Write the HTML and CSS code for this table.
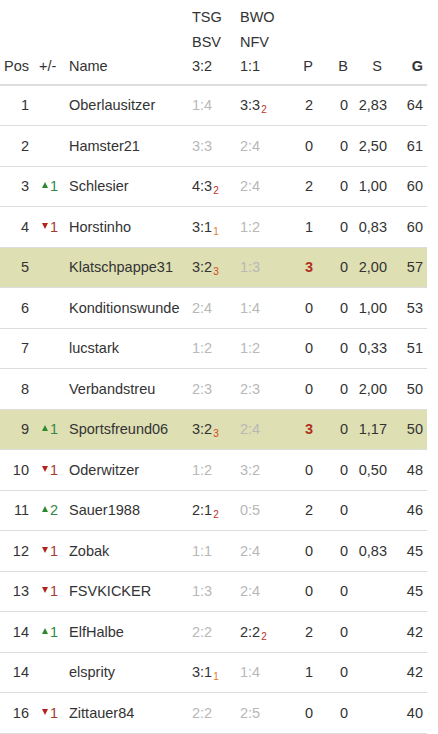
FILE: index.html
```html
<!DOCTYPE html>
<html lang="de">
<head>
<meta charset="utf-8">
<title>Tabelle</title>
<link rel="stylesheet" href="styles.css">
</head>
<body>
<table class="tbl">
  <colgroup>
    <col class="c-pos"><col class="c-diff"><col class="c-name"><col class="c-g1"><col class="c-g2"><col class="c-p"><col class="c-b"><col class="c-s"><col class="c-g">
  </colgroup>
  <thead>
    <tr>
      <th class="r">Pos</th>
      <th class="l diffh">+/-</th>
      <th class="l">Name</th>
      <th class="l">TSG<br>BSV<br>3:2</th>
      <th class="l">BWO<br>NFV<br>1:1</th>
      <th class="r">P</th>
      <th class="r">B</th>
      <th class="r sh">S</th>
      <th class="r bold">G</th>
    </tr>
  </thead>
  <tbody>
    <tr><td class="r">1</td><td></td><td>Oberlausitzer</td><td class="miss">1:4</td><td>3:3<sub class="p2">2</sub></td><td class="r">2</td><td class="r">0</td><td class="r">2,83</td><td class="r">64</td></tr>
    <tr><td class="r">2</td><td></td><td>Hamster21</td><td class="miss">3:3</td><td class="miss">2:4</td><td class="r">0</td><td class="r">0</td><td class="r">2,50</td><td class="r">61</td></tr>
    <tr><td class="r">3</td><td><span class="up"><i></i>1</span></td><td>Schlesier</td><td>4:3<sub class="p2">2</sub></td><td class="miss">2:4</td><td class="r">2</td><td class="r">0</td><td class="r">1,00</td><td class="r">60</td></tr>
    <tr><td class="r">4</td><td><span class="down"><i></i>1</span></td><td>Horstinho</td><td>3:1<sub class="p1">1</sub></td><td class="miss">1:2</td><td class="r">1</td><td class="r">0</td><td class="r">0,83</td><td class="r">60</td></tr>
    <tr class="hl"><td class="r">5</td><td></td><td>Klatschpappe31</td><td>3:2<sub class="p3">3</sub></td><td class="miss">1:3</td><td class="r top">3</td><td class="r">0</td><td class="r">2,00</td><td class="r">57</td></tr>
    <tr><td class="r">6</td><td></td><td>Konditionswunde</td><td class="miss">2:4</td><td class="miss">1:4</td><td class="r">0</td><td class="r">0</td><td class="r">1,00</td><td class="r">53</td></tr>
    <tr><td class="r">7</td><td></td><td>lucstark</td><td class="miss">1:2</td><td class="miss">1:2</td><td class="r">0</td><td class="r">0</td><td class="r">0,33</td><td class="r">51</td></tr>
    <tr><td class="r">8</td><td></td><td>Verbandstreu</td><td class="miss">2:3</td><td class="miss">2:3</td><td class="r">0</td><td class="r">0</td><td class="r">2,00</td><td class="r">50</td></tr>
    <tr class="hl"><td class="r">9</td><td><span class="up"><i></i>1</span></td><td>Sportsfreund06</td><td>3:2<sub class="p3">3</sub></td><td class="miss">2:4</td><td class="r top">3</td><td class="r">0</td><td class="r">1,17</td><td class="r">50</td></tr>
    <tr><td class="r">10</td><td><span class="down"><i></i>1</span></td><td>Oderwitzer</td><td class="miss">1:2</td><td class="miss">3:2</td><td class="r">0</td><td class="r">0</td><td class="r">0,50</td><td class="r">48</td></tr>
    <tr><td class="r">11</td><td><span class="up"><i></i>2</span></td><td>Sauer1988</td><td>2:1<sub class="p2">2</sub></td><td class="miss">0:5</td><td class="r">2</td><td class="r">0</td><td class="r"></td><td class="r">46</td></tr>
    <tr><td class="r">12</td><td><span class="down"><i></i>1</span></td><td>Zobak</td><td class="miss">1:1</td><td class="miss">2:4</td><td class="r">0</td><td class="r">0</td><td class="r">0,83</td><td class="r">45</td></tr>
    <tr><td class="r">13</td><td><span class="down"><i></i>1</span></td><td>FSVKICKER</td><td class="miss">1:3</td><td class="miss">2:4</td><td class="r">0</td><td class="r">0</td><td class="r"></td><td class="r">45</td></tr>
    <tr><td class="r">14</td><td><span class="up"><i></i>1</span></td><td>ElfHalbe</td><td class="miss">2:2</td><td>2:2<sub class="p2">2</sub></td><td class="r">2</td><td class="r">0</td><td class="r"></td><td class="r">42</td></tr>
    <tr><td class="r">14</td><td></td><td>elsprity</td><td>3:1<sub class="p1">1</sub></td><td class="miss">1:4</td><td class="r">1</td><td class="r">0</td><td class="r"></td><td class="r">42</td></tr>
    <tr><td class="r">16</td><td><span class="down"><i></i>1</span></td><td>Zittauer84</td><td class="miss">2:2</td><td class="miss">2:5</td><td class="r">0</td><td class="r">0</td><td class="r"></td><td class="r">40</td></tr>
  </tbody>
</table>
</body>
</html>
```

FILE: styles.css
```css
html, body {
  margin: 0;
  padding: 0;
  background: #fff;
}
body {
  font-family: "Liberation Sans", Arial, sans-serif;
  font-size: 14.5px;
  color: #333;
}
.tbl {
  width: 427px;
  border-collapse: collapse;
  table-layout: fixed;
}
.c-pos { width: 33px; }
.c-diff { width: 32px; }
.c-name { width: 123px; }
.c-g1 { width: 48px; }
.c-g2 { width: 54px; }
.c-p { width: 27px; }
.c-b { width: 35px; }
.c-s { width: 39px; }
.c-g { width: 36px; }

.tbl th {
  font-weight: normal;
  vertical-align: bottom;
  line-height: 24.5px;
  padding: 5px 4px 5px 4px;
  border-bottom: 2px solid #ddd;
  color: #333;
  white-space: nowrap;
}
.tbl th.diffh { padding-left: 6px; }
.tbl th.sh { padding-right: 9px; }
.tbl th.bold { font-weight: bold; }
.tbl td {
  height: 24.5px;
  line-height: 24.5px;
  padding: 7.5px 4px 7.5px 4px;
  border-bottom: 1px solid #ddd;
  white-space: nowrap;
  text-align: left;
  vertical-align: middle;
}
.tbl .l { text-align: left; }
.tbl .r { text-align: right; }
.tbl tr.hl td { background: #dedfb3; }
.tbl td.miss { color: #b8b8b8; }
.tbl td.top { color: #b0321e; font-weight: bold; }

sub {
  font-size: 10px;
  line-height: 0;
  vertical-align: -3px;
  margin-left: 1px;
}
.p1 { color: #e07a2c; }
.p2 { color: #b8322a; }
.p3 { color: #cf4c1a; }

.up, .down {
  margin-left: 5px;
}
.up { color: #2f8a44; }
.down { color: #a6392c; }
.up i, .down i {
  display: inline-block;
  vertical-align: top;
  width: 0;
  height: 0;
  margin-top: 8px;
  margin-right: 2px;
  border-left: 3.5px solid transparent;
  border-right: 3.5px solid transparent;
}
.up i { border-bottom: 6px solid #2b8a2b; }
.down i { border-top: 6px solid #b3231a; }
```
